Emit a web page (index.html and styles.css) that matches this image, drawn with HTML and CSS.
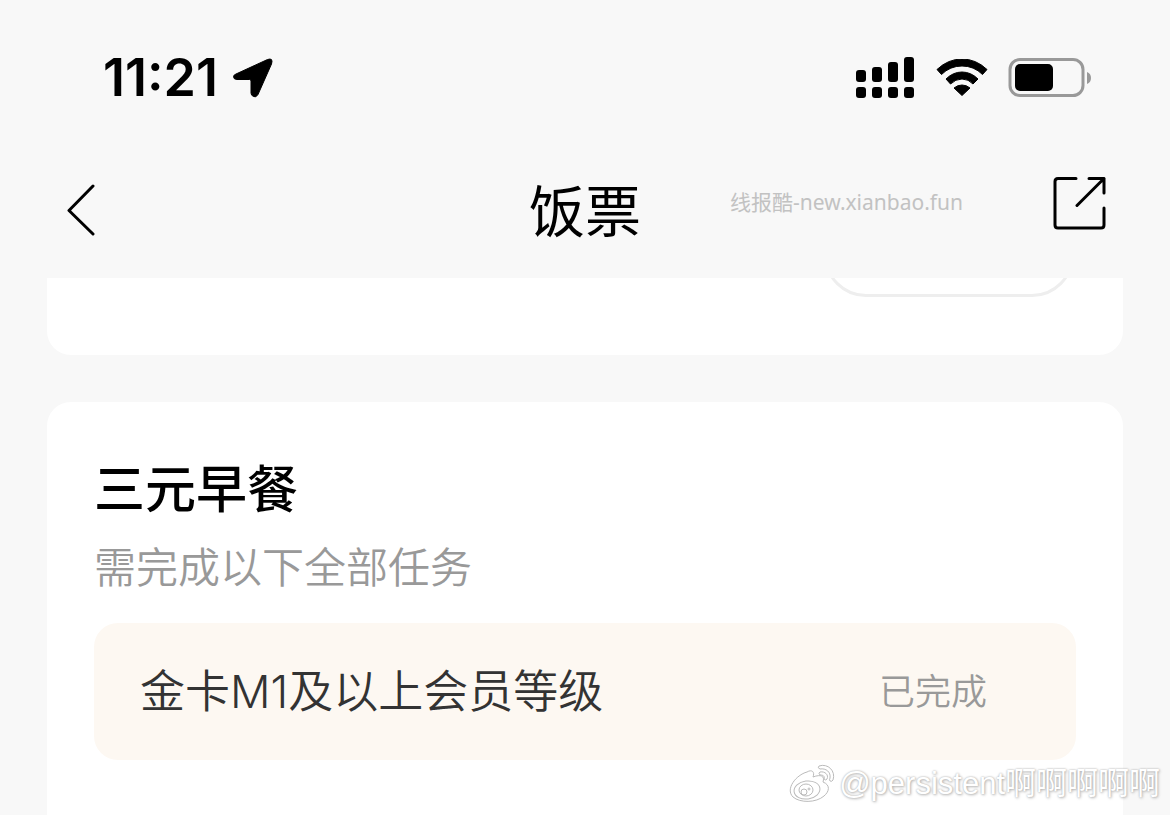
FILE: index.html
```html
<!DOCTYPE html>
<html lang="zh-CN">
<head>
<meta charset="utf-8">
<meta name="viewport" content="width=device-width, initial-scale=1">
<title>饭票</title>
<link rel="stylesheet" href="styles.css">
</head>
<body>
<div class="screen">
  <div class="status-bar">
    <div class="status-group">
      <span class="clock">11:21</span>
      <svg class="location" width="40" height="40" viewBox="0 0 40 40" aria-hidden="true">
        <path d="M3 16 34.500 1.500Q40.500-.5 38.500 6L25 36.500Q23 40 20.500 38.500 18 37.500 18 35V23Q18 21.500 16.500 21.500H4Q.5 21.500 .5 18.500.5 17 3 16Z" stroke="#000" stroke-linejoin="round"/>
      </svg>
    </div>
    <div class="status-group status-icons">
      <svg width="60" height="42" viewBox="0 0 60 42" aria-hidden="true">
        <rect x="0" y="13" width="10" height="12" rx="3"/><rect x="16" y="10" width="10" height="15" rx="3"/><rect x="32" y="5" width="10" height="20" rx="3"/><rect x="48" y="0" width="10" height="25" rx="3"/>
        <rect x="0" y="30" width="10" height="11" rx="3"/><rect x="16" y="30" width="10" height="11" rx="3"/><rect x="32" y="30" width="10" height="11" rx="3"/><rect x="48" y="30" width="10" height="11" rx="3"/>
      </svg>
      <svg width="52" height="38" viewBox="0 0 52 38" aria-hidden="true">
        <path d="M1 10.500Q12 0 26 0T51 10.500L46.500 15.500Q38 7 26 7T5.500 15.500ZM10 20Q17 13 26 13T42 20L37 25Q32.500 20 26 20T14.500 25ZM18 29Q21.500 26 26 26T34 29L26 36.500Z" stroke="#000" stroke-linejoin="round"/>
      </svg>
      <svg width="84" height="40" viewBox="0 0 84 40" aria-hidden="true">
        <rect x="2" y="1.500" width="73" height="36" rx="10" fill="none" stroke="#999" stroke-width="3"/>
        <rect x="7" y="6" width="38" height="27" rx="5"/>
        <path d="M79 14Q83 15.500 83 20T79 26Z" fill="#999"/>
      </svg>
    </div>
  </div>
  <header class="nav">
    <button class="icon-button" type="button" aria-label="返回">
      <svg width="30" height="54" viewBox="0 0 30 54"><path class="line" d="M27 2 3 26.500 27 50"/></svg>
    </button>
    <h1 class="nav-title">饭票</h1>
    <button class="icon-button share" type="button" aria-label="分享">
      <svg width="56" height="56" viewBox="0 0 56 56"><path class="line" d="M24 1.500H6Q3 1.500 3 4.500V48Q3 51 6 51H49Q52 51 52 48V31M37 1.500H52V16M52 1.500 25 28.500"/></svg>
    </button>
    <span class="site-mark">线报酷-new.xianbao.fun</span>
  </header>
  <main class="content">
    <section class="card card-previous"><div class="pill"></div></section>
    <section class="card card-task">
      <h2 class="task-title">三元早餐</h2>
      <p class="task-note">需完成以下全部任务</p>
      <div class="task-row">
        <span class="task-name">金卡M1及以上会员等级</span>
        <span class="task-state">已完成</span>
      </div>
    </section>
  </main>
  <div class="author-mark">
    <svg width="46" height="40" viewBox="0 0 46 40" aria-hidden="true">
      <g fill="#fff" stroke="#bbb" stroke-width="1">
        <path d="M18 8C23 5 26 8 24 13C32 10 36 12 34 18C42 21 40 28 35 32C27 39 11 39 4 33C-4 25 7 11 18 8Z"/>
        <ellipse cx="18" cy="26" rx="13" ry="9" transform="rotate(-8 18 26)"/>
        <ellipse cx="17" cy="26" rx="7" ry="6"/>
        <circle cx="15" cy="28" r="3"/><circle cx="20" cy="25" r="1"/>
        <path d="M30 2C39-1 47 7 44 16Q43 18 41 17 40 16 41 14C42 8 37 4 31 5Q28 4 30 2ZM31 8C36 7 40 11 38 15Q37 17 35 15C36 12 34 11 31 11Q29 9 31 8Z"/>
      </g>
    </svg>
    <span>@persistent啊啊啊啊啊</span>
  </div>
</div>
</body>
</html>
```
FILE: styles.css
```css
* {
  box-sizing: border-box;
}

body {
  margin: 0;
  background: #f8f8f8;
  color: #000;
  font-family: "Noto Sans CJK SC", sans-serif;
}

h1, h2, p {
  margin: 0;
}

svg {
  display: block;
}

.screen {
  position: relative;
  display: flex;
  flex-direction: column;
  height: 100vh;
  overflow: hidden;
}

.status-bar {
  display: flex;
  flex: none;
  align-items: center;
  justify-content: space-between;
  height: 156px;
  padding: 0 78px 0 103px;
}

.status-group {
  display: flex;
  align-items: center;
  gap: 15px;
}

.status-icons {
  gap: 20px;
}

.clock {
  font: 600 52px/60px Inter, sans-serif;
}

.nav {
  position: relative;
  display: grid;
  grid-template-columns: 1fr auto 1fr;
  flex: none;
  align-items: center;
  height: 122px;
  padding: 0 62px 12px 66px;
}

.icon-button {
  padding: 0;
  border: 0;
  background: none;
  justify-self: start;
}

.share {
  justify-self: end;
  padding-bottom: 12px;
}

.line {
  fill: none;
  stroke: #000;
  stroke-width: 3;
  stroke-linecap: round;
  stroke-linejoin: round;
}

.nav-title {
  padding: 0 4px 6px 0;
  font-size: 56px;
  font-weight: 400;
  line-height: 80px;
}

.site-mark {
  position: absolute;
  top: 31px;
  right: 207px;
  color: #c2c2c2;
  font: 400 21px/30px "Noto Sans", "Noto Sans CJK SC", sans-serif;
}

.content {
  display: flex;
  flex: 1;
  flex-direction: column;
  gap: 47px;
  min-height: 0;
  padding: 0 47px;
}

.card {
  background: #fff;
}

.card-previous {
  display: flex;
  align-items: flex-end;
  justify-content: flex-end;
  flex: none;
  height: 77px;
  padding: 0 49px 58px;
  border-radius: 0 0 24px 24px;
  overflow: hidden;
}

.pill {
  flex: none;
  width: 250px;
  height: 84px;
  border: 3px solid #eee;
  border-radius: 42px;
}

.card-task {
  flex: 1;
  padding: 44px 47px 47px;
  border-radius: 24px 24px 0 0;
}

.task-title {
  font-size: 51px;
  font-weight: 500;
  line-height: 80px;
}

.task-note {
  margin: 5px 0 24px;
  color: #999;
  font-size: 42px;
  font-weight: 350;
  line-height: 68px;
}

.task-row {
  display: flex;
  align-items: center;
  justify-content: space-between;
  height: 137px;
  padding: 0 89px 6px 46px;
  border-radius: 24px;
  background: #fdf8f2;
}

.task-name {
  color: #333;
  font-family: Inter, "Noto Sans CJK SC", sans-serif;
  font-size: 45px;
  font-weight: 350;
}

.task-state {
  color: #999;
  font-size: 36px;
  font-weight: 350;
}

.author-mark {
  position: absolute;
  right: 10px;
  bottom: 9px;
  display: flex;
  align-items: center;
  gap: 4px;
  color: #fff;
  font: 31px/44px "Liberation Sans", "Noto Sans CJK SC", sans-serif;
  text-shadow: 0 0 2px #aaa, 1px 1px 3px #bbb;
}
```
